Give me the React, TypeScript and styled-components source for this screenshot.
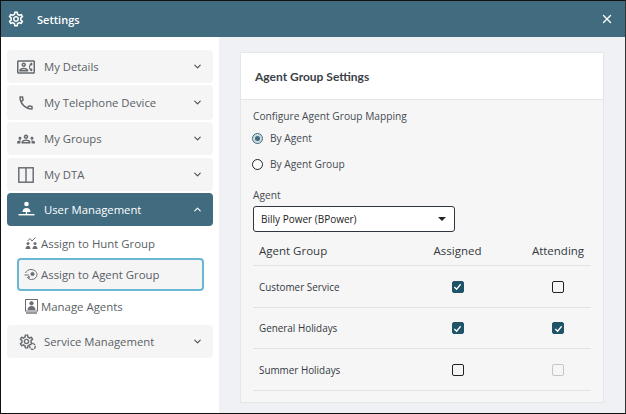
import React from 'react';
import styled, { createGlobalStyle } from 'styled-components';
import { ChevronDown, ChevronUp, X } from 'lucide-react';
import { MdOutlineCall, MdOutlineContactPhone, MdOutlineGroups, MdOutlineSettings } from 'react-icons/md';

const GlobalStyle = createGlobalStyle`
  html, body { margin: 0; padding: 0; background: #fff; }
  body { font-family: "Open Sans", "Liberation Sans", sans-serif; }
`;

const Frame = styled.div`
  width: 626px;
  height: 414px;
  box-sizing: border-box;
  border: 1px solid #111;
  border-right: 1px solid #333;
  display: flex;
  flex-direction: column;
  overflow: hidden;
`;

const TitleBar = styled.header`
  height: 36px;
  flex: none;
  background: #416b7f;
  color: #fff;
  display: flex;
  align-items: center;
  padding: 0 11px 0 6px;
  font-size: 11px;
  font-weight: 600;
`;

const TitleText = styled.span`
  margin-left: 12px;
  flex: 1;
`;

const Body = styled.div`
  flex: 1;
  display: flex;
  min-height: 0;
`;

const Sidebar = styled.nav`
  width: 218px;
  flex: none;
  background: #fff;
  padding: 13px 6px 0 6px;
  box-sizing: border-box;
  display: flex;
  flex-direction: column;
`;

const MenuRow = styled.div<{ $active?: boolean; $h?: number; $gap?: number; $top?: number }>`
  height: ${p => p.$h ?? 33}px;
  flex: none;
  margin-top: ${p => p.$top ?? 0}px;
  margin-bottom: ${p => p.$gap ?? 2}px;
  border-radius: 4px;
  background: ${p => (p.$active ? '#416b7f' : '#f5f5f5')};
  color: ${p => (p.$active ? '#fff' : '#5a5f66')};
  font-weight: ${p => (p.$active ? 500 : 400)};
  display: flex;
  align-items: center;
  padding: 0 10px 0 10px;
  font-size: 11.3px;
`;

const MenuIcon = styled.span`
  width: 18px;
  height: 18px;
  display: flex;
  align-items: center;
  justify-content: center;
  flex: none;
  color: #66696e;
`;

const MenuLabel = styled.span`
  margin-left: 9px;
  flex: 1;
  white-space: nowrap;
`;

const Chevron = styled.span<{ $active?: boolean }>`
  display: flex;
  color: ${p => (p.$active ? '#fff' : '#4a4f55')};
`;

const SubRow = styled.div<{ $selected?: boolean; $h: number; $pb?: number }>`
  height: ${p => p.$h}px;
  box-sizing: border-box;
  flex: none;
  margin-left: 10px;
  width: 187px;
  display: flex;
  align-items: center;
  padding-left: 5px;
  padding-bottom: ${p => p.$pb ?? 0}px;
  font-size: 11.4px;
  color: #5a5f66;
  border-radius: 4px;
  background: ${p => (p.$selected ? '#f5f5f5' : 'transparent')};
  border: ${p => (p.$selected ? '2px solid #6ab7d4' : '2px solid transparent')};
`;

const SubIcon = styled.span`
  width: 14px;
  display: flex;
  justify-content: center;
  flex: none;
`;

const SubLabel = styled.span`
  margin-left: 3px;
  white-space: nowrap;
`;

const Content = styled.main`
  flex: 1;
  background: #eff1f5;
  padding: 15px 21px 10px 21px;
  box-sizing: border-box;
  display: flex;
`;

const Card = styled.section`
  flex: 1;
  border: 1px solid #e4e6e8;
  background: #f6f6f6;
  display: flex;
  flex-direction: column;
`;

const CardHead = styled.div`
  height: 46px;
  flex: none;
  background: #fff;
  border-bottom: 1px solid #e4e6e8;
  display: flex;
  align-items: center;
  padding-left: 14px;
  font-family: "Lato", sans-serif;
  font-size: 12px;
  font-weight: 700;
  color: #3b4148;
`;

const CardBody = styled.div`
  padding: 9px 12px 0 12px;
  display: flex;
  flex-direction: column;
  font-size: 10.2px;
  color: #454b52;
`;

const FieldLabel = styled.div<{ $mt?: number }>`
  line-height: 15px;
  margin-top: ${p => p.$mt ?? 0}px;
`;

const RadioRow = styled.label`
  display: flex;
  align-items: center;
  height: 26px;
  margin-top: 1px;
  margin-bottom: -1px;
  gap: 7px;
`;

const Radio = styled.span<{ $on?: boolean }>`
  width: 11px;
  height: 11px;
  box-sizing: border-box;
  margin-left: -1px;
  border-radius: 50%;
  border: 1px solid ${p => (p.$on ? '#416b7f' : '#222')};
  background: ${p => (p.$on ? '#cfdbe1' : '#fff')};
  display: flex;
  align-items: center;
  justify-content: center;
  &::after {
    content: '';
    display: ${p => (p.$on ? 'block' : 'none')};
    width: 5px;
    height: 5px;
    border-radius: 50%;
    background: #416b7f;
  }
`;

const SelectBox = styled.div`
  width: 202px;
  height: 26px;
  margin-top: 3px;
  box-sizing: border-box;
  border: 1px solid #2f3640;
  border-radius: 3px;
  background: #fff;
  display: flex;
  align-items: center;
  padding: 0 8px 0 7px;
  font-size: 10px;
  color: #222;
  justify-content: space-between;
`;

const Caret = styled.span`
  width: 0;
  height: 0;
  border-left: 4px solid transparent;
  border-right: 4px solid transparent;
  border-top: 4px solid #222;
`;

const GroupTable = styled.div`
  width: 338px;
  display: flex;
  flex-direction: column;
`;

const Row = styled.div<{ $h: number; $head?: boolean }>`
  display: grid;
  grid-template-columns: 131px 135px 66px;
  align-items: center;
  height: ${p => p.$h}px;
  box-sizing: border-box;
  border-bottom: 1px solid #e0e2e4;
  padding-left: 6px;
  padding-top: ${p => (p.$head ? '4px' : '0')};
  font-size: ${p => (p.$head ? '11.5px' : '9.9px')};
  color: #33393f;
`;

const HeadCell = styled.div`
  text-align: center;
  white-space: nowrap;
`;

const BoxCell = styled.div`
  display: flex;
  justify-content: center;
`;

const CheckBox = styled.span<{ $on?: boolean; $off?: boolean }>`
  width: 12px;
  height: 12px;
  box-sizing: border-box;
  border-radius: 2px;
  border: 1px solid ${p => (p.$on ? '#1f5468' : p.$off ? '#c4c6c8' : '#222')};
  background: ${p => (p.$on ? '#1f5468' : '#f6f6f6')};
  display: flex;
  align-items: center;
  justify-content: center;
`;

const GearBadge = styled.span`
  position: relative;
  display: flex;
`;

const GearSmall = styled.svg`
  position: absolute;
  right: -2px;
  bottom: -1px;
`;

const Check = () => (
  <svg width="9" height="9" viewBox="0 0 10 10" fill="none" stroke="#fff" strokeWidth="1.4">
    <path d="M1.5 5.5 L4 8 L8.5 2.5" />
  </svg>
);

const PanelIcon = () => (
  <svg width="16" height="16" viewBox="0 0 16 16" fill="none" stroke="#6b6f74" strokeWidth="1.5">
    <rect x="0.8" y="0.8" width="14.4" height="14.4" />
    <path d="M8 0.8V15.2" />
  </svg>
);

const UserMgmtIcon = () => (
  <svg width="17" height="17" viewBox="0 0 17 17" fill="#fff">
    <circle cx="8.500" cy="3" r="2.300" />
    <path d="M4.500 11c0-2.800 1.800-4 4-4s4 1.200 4 4z" />
    <rect x="0.500" y="13" width="16" height="1.400" />
    <rect x="7.800" y="11" width="1.400" height="3" />
  </svg>
);

const HuntIcon = () => (
  <svg width="13" height="12" viewBox="0 0 13 12" fill="#6b6f74">
    <circle cx="3" cy="6.500" r="1.500" />
    <circle cx="10" cy="6.500" r="1.500" />
    <path d="M0.500 12c0-2 1-3.300 2.500-3.300s2.500 1.300 2.500 3.300z" />
    <path d="M7.500 12c0-2 1-3.300 2.500-3.300s2.500 1.300 2.500 3.300z" />
    <path d="M2.500 4 L5 1.500 L7 4 L10.500 0.500" fill="none" stroke="#6b6f74" strokeWidth="1" />
  </svg>
);

const AgentGroupIcon = () => (
  <svg width="14" height="12" viewBox="0 0 14 12" fill="none" stroke="#6b6f74" strokeWidth="1">
    <path d="M1.500 4c1-2.300 3-3.500 5.500-3.500 3 0 6 2 6 5s-2.500 5-5.500 5c-2 0-3.500-1-4.500-2.500" />
    <circle cx="8.500" cy="5" r="1.600" fill="#6b6f74" />
    <path d="M0.500 6h4.500" />
    <circle cx="5" cy="8" r="0.600" fill="#6b6f74" />
  </svg>
);

const ManageIcon = () => (
  <svg width="13" height="15" viewBox="0 0 13 15" fill="none" stroke="#6b6f74" strokeWidth="1">
    <rect x="0.500" y="0.500" width="12" height="11.500" />
    <circle cx="6.500" cy="4.300" r="1.700" fill="#6b6f74" />
    <path d="M3 10.500c0-2 1.500-3 3.500-3s3.500 1 3.500 3z" fill="#6b6f74" />
    <path d="M1 14h11" strokeWidth="1.400" />
  </svg>
);

const menuTop = [
  { label: 'My Details', icon: <MdOutlineContactPhone size={20} />, h: 33, gap: 2 },
  { label: 'My Telephone Device', icon: <MdOutlineCall size={18} />, h: 35, gap: 2 },
  { label: 'My Groups', icon: <MdOutlineGroups size={20} />, h: 33, gap: 3 },
  { label: 'My DTA', icon: <PanelIcon />, h: 33, gap: 2 },
];

const groups = [
  { name: 'Customer Service', h: 42, assigned: true, attending: false },
  { name: 'General Holidays', h: 41, assigned: true, attending: true },
  { name: 'Summer Holidays', h: 42, assigned: false, attending: false, disabled: true },
];

export default function App() {
  return (
    <>
      <GlobalStyle />
      <Frame>
        <TitleBar>
          <MdOutlineSettings size={18} />
          <TitleText>Settings</TitleText>
          <X size={14} strokeWidth={2.4} />
        </TitleBar>
        <Body>
          <Sidebar>
            {menuTop.map(m => (
              <MenuRow key={m.label} $h={m.h} $gap={m.gap}>
                <MenuIcon>{m.icon}</MenuIcon>
                <MenuLabel>{m.label}</MenuLabel>
                <Chevron><ChevronDown size={11} strokeWidth={2.4} /></Chevron>
              </MenuRow>
            ))}
            <MenuRow $active>
              <MenuIcon><UserMgmtIcon /></MenuIcon>
              <MenuLabel>User Management</MenuLabel>
              <Chevron $active><ChevronUp size={11} strokeWidth={2.4} /></Chevron>
            </MenuRow>
            <SubRow $h={30}>
              <SubIcon><HuntIcon /></SubIcon>
              <SubLabel>Assign to Hunt Group</SubLabel>
            </SubRow>
            <SubRow $h={33} $selected>
              <SubIcon><AgentGroupIcon /></SubIcon>
              <SubLabel>Assign to Agent Group</SubLabel>
            </SubRow>
            <SubRow $h={32} $pb={2}>
              <SubIcon><ManageIcon /></SubIcon>
              <SubLabel>Manage Agents</SubLabel>
            </SubRow>
            <MenuRow $top={2}>
              <MenuIcon>
                <GearBadge>
                  <MdOutlineSettings size={17} />
                  <GearSmall width="9" height="9" viewBox="0 0 9 9" fill="#f5f5f5" stroke="#66696e" strokeWidth="1.3">
                    <circle cx="4.500" cy="4.500" r="2.800" strokeDasharray="2.500 0.800" />
                  </GearSmall>
                </GearBadge>
              </MenuIcon>
              <MenuLabel>Service Management</MenuLabel>
              <Chevron><ChevronDown size={11} strokeWidth={2.4} /></Chevron>
            </MenuRow>
          </Sidebar>
          <Content>
            <Card>
              <CardHead>Agent Group Settings</CardHead>
              <CardBody>
                <FieldLabel>Configure Agent Group Mapping</FieldLabel>
                <RadioRow><Radio $on />By Agent</RadioRow>
                <RadioRow><Radio />By Agent Group</RadioRow>
                <FieldLabel $mt={12}>Agent</FieldLabel>
                <SelectBox>Billy Power (BPower)<Caret /></SelectBox>
                <GroupTable>
                  <Row $head $h={34}>
                    <div>Agent Group</div>
                    <HeadCell>Assigned</HeadCell>
                    <HeadCell>Attending</HeadCell>
                  </Row>
                  {groups.map(g => (
                    <Row key={g.name} $h={g.h}>
                      <div>{g.name}</div>
                      <BoxCell><CheckBox $on={g.assigned}>{g.assigned && <Check />}</CheckBox></BoxCell>
                      <BoxCell><CheckBox $on={g.attending} $off={g.disabled}>{g.attending && <Check />}</CheckBox></BoxCell>
                    </Row>
                  ))}
                </GroupTable>
              </CardBody>
            </Card>
          </Content>
        </Body>
      </Frame>
    </>
  );
}
